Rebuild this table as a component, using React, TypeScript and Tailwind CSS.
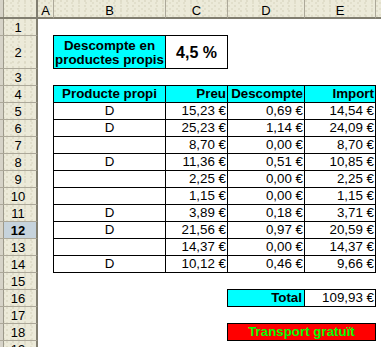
import React from "react";

const FONT = "font-['Liberation_Sans',Arial,sans-serif]";
const HEAD_BG =
  "bg-[#ecead9] bg-[radial-gradient(circle_at_1px_1px,#d9d5c1_0.6px,transparent_0.9px),radial-gradient(circle_at_4px_3px,#dcd8c5_0.6px,transparent_0.9px)] bg-[length:6px_5px,7px_6px]";
const STRIP = "shadow-[inset_3px_0_0_#d6d3c8,inset_4px_0_0_#9c998b]";

const COLS = ["A", "B", "C", "D", "E", ""];

// rows 5..14 of the order table: [own product, price, discount, amount]
const ITEMS: [string, string, string, string][] = [
  ["D", "15,23 €", "0,69 €", "14,54 €"],
  ["D", "25,23 €", "1,14 €", "24,09 €"],
  ["", "8,70 €", "0,00 €", "8,70 €"],
  ["D", "11,36 €", "0,51 €", "10,85 €"],
  ["", "2,25 €", "0,00 €", "2,25 €"],
  ["", "1,15 €", "0,00 €", "1,15 €"],
  ["D", "3,89 €", "0,18 €", "3,71 €"],
  ["D", "21,56 €", "0,97 €", "20,59 €"],
  ["", "14,37 €", "0,00 €", "14,37 €"],
  ["D", "10,12 €", "0,46 €", "9,66 €"],
];

const BOX = "border-t border-l border-black";
const SH_R = "shadow-[1px_0_0_#000]";
const SH_B = "shadow-[0_1px_0_#000]";
const SH_RB = "shadow-[1px_0_0_#000,0_1px_0_#000,1px_1px_0_#000]";
const CELL = "flex items-end text-[13.33px] leading-[16px] whitespace-nowrap overflow-visible";

function Empty() {
  return <div />;
}

function RowHead({ n }: { n: number }) {
  const sel = n === 12;
  return (
    <div
      className={`flex items-center justify-center pt-px text-[13px] leading-[15px] text-black border-r-2 border-r-[#817e70] ${STRIP} ${
        n > 1 ? "border-t border-t-[#aca899]" : ""
      } ${sel ? "bg-[#c6d3dc] font-bold" : HEAD_BG}`}
    >
      {n}
    </div>
  );
}

export default function App() {
  const rows: React.ReactNode[] = [];

  for (let r = 1; r <= 19; r++) {
    const cells: React.ReactNode[] = [<RowHead key={`h${r}`} n={r} />];

    if (r === 2) {
      cells.push(
        <Empty key="a" />,
        <div
          key="b"
          className={`${BOX} ${SH_B} bg-[#00ffff] flex flex-col items-center justify-center text-[13.33px] leading-[14px] font-bold pt-[2px]`}
        >
          <span>Descompte en</span>
          <span>productes propis</span>
        </div>,
        <div
          key="c"
          className={`${BOX} ${SH_RB} bg-white flex items-center justify-center text-[16px] font-bold pt-px`}
        >
          4,5 %
        </div>,
        <Empty key="d" />,
        <Empty key="e" />,
        <Empty key="f" />
      );
    } else if (r === 4) {
      cells.push(
        <Empty key="a" />,
        <div key="b" className={`${BOX} ${CELL} bg-[#00ffff] font-bold justify-center`}>
          Producte propi
        </div>,
        <div key="c" className={`${BOX} ${CELL} bg-[#00ffff] font-bold justify-end pr-px`}>
          Preu
        </div>,
        <div key="d" className={`${BOX} ${CELL} bg-[#00ffff] font-bold justify-end pr-px`}>
          Descompte
        </div>,
        <div key="e" className={`${BOX} ${CELL} ${SH_R} bg-[#00ffff] font-bold justify-end pr-px`}>
          Import
        </div>,
        <Empty key="f" />
      );
    } else if (r >= 5 && r <= 14) {
      const [own, price, disc, amount] = ITEMS[r - 5];
      const last = r === 14;
      cells.push(
        <Empty key="a" />,
        <div key="b" className={`${BOX} ${CELL} ${last ? SH_B : ""} justify-center`}>
          {own}
        </div>,
        <div key="c" className={`${BOX} ${CELL} ${last ? SH_B : ""} justify-end pr-px`}>
          {price}
        </div>,
        <div key="d" className={`${BOX} ${CELL} ${last ? SH_B : ""} justify-end pr-px`}>
          {disc}
        </div>,
        <div key="e" className={`${BOX} ${CELL} ${last ? SH_RB : SH_R} justify-end pr-px`}>
          {amount}
        </div>,
        <Empty key="f" />
      );
    } else if (r === 16) {
      cells.push(
        <Empty key="a" />,
        <Empty key="b" />,
        <Empty key="c" />,
        <div key="d" className={`${BOX} ${CELL} ${SH_B} bg-[#00ffff] font-bold justify-end pr-[2px]`}>
          Total
        </div>,
        <div key="e" className={`${BOX} ${CELL} ${SH_RB} justify-end pr-px`}>
          109,93 €
        </div>,
        <Empty key="f" />
      );
    } else if (r === 18) {
      cells.push(
        <Empty key="a" />,
        <Empty key="b" />,
        <Empty key="c" />,
        <div
          key="de"
          className={`col-span-2 ${BOX} ${CELL} ${SH_RB} bg-[#ff0000] text-[#00ff00] font-bold justify-center`}
        >
          Transport gratuït
        </div>,
        <Empty key="f" />
      );
    } else {
      COLS.forEach((c, i) => cells.push(<Empty key={`e${i}`} />));
    }

    rows.push(<React.Fragment key={r}>{cells}</React.Fragment>);
  }

  return (
    <div className={`w-[381px] h-[347px] overflow-hidden bg-white text-black ${FONT}`}>
      <div className="grid grid-cols-[38px_15px_112px_62px_77px_71px_1fr] grid-rows-[19px_16px_33px_repeat(17,17px)]">
        {/* corner */}
        <div className={`${HEAD_BG} ${STRIP} border-r-2 border-b-2 border-[#817e70]`} />
        {/* column letters; the last column runs past the window edge */}
        {COLS.map((c, i) => (
          <div
            key={`c${i}`}
            className={`${HEAD_BG} border-b-2 border-b-[#817e70] ${
              i > 0 ? "border-l border-l-[#aca899]" : ""
            } text-center text-[13px] leading-[13px] pt-[4px]`}
          >
            {c}
          </div>
        ))}
        {rows}
      </div>
    </div>
  );
}
